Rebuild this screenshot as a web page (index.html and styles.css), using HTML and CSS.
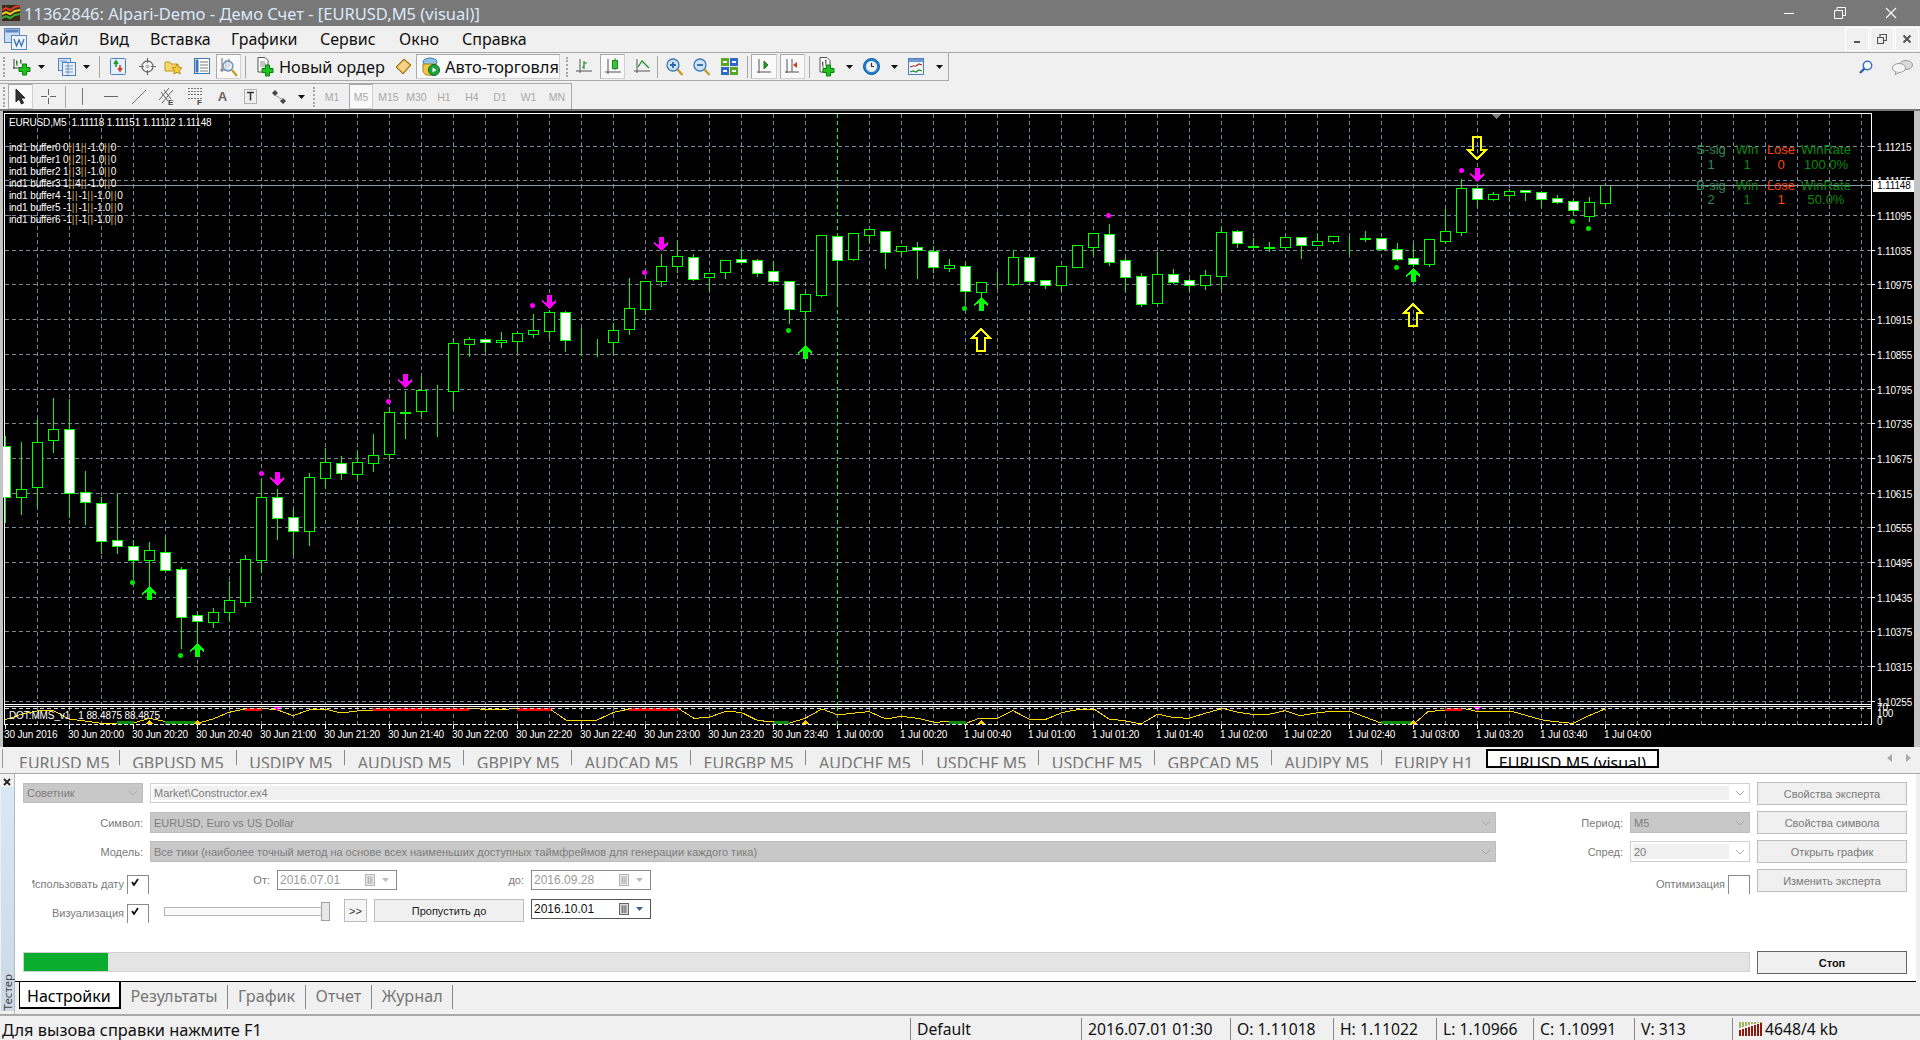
FILE: index.html
```html
<!DOCTYPE html>
<html>
<head>
  <meta charset="UTF-8" />
  <title>11362846: Alpari-Demo - Демо Счет - [EURUSD,M5 (visual)]</title>
  <link rel="stylesheet" href="styles.css">
</head>
<body>
  <!-- shared small glyphs -->
  <svg class="defs" width="0" height="0">
    <symbol id="chev" viewBox="0 0 10 6"><path d="M1 1l4 4 4-4" fill="none" stroke="#a8a8a8"/></symbol>
    <symbol id="tick" viewBox="0 0 8 8"><path d="M1 4l2 3 4-6" fill="none" stroke="#111" stroke-width="1.8"/></symbol>
    <symbol id="cal" viewBox="0 0 11 13"><rect x=".5" y=".5" width="9" height="11" fill="#e8e8e8" stroke="#b5b5b5"/><path d="M2 3h6M2 5h6M2 7h6M2 9h6M3.500 3v7M6 3v7" stroke="#b8b8b8"/></symbol>
    <symbol id="cal-on" viewBox="0 0 11 13"><rect x=".5" y=".5" width="9" height="11" fill="#dcdcdc" stroke="#666"/><path d="M2 3h6M2 5h6M2 7h6M2 9h6M3.500 3v7M6 3v7" stroke="#777"/></symbol>
    <symbol id="drop" viewBox="0 0 7 4"><path d="M0 0h7L3.500 4z" fill="#111"/></symbol>
    <symbol id="plus" viewBox="0 0 13 13"><path d="M4.500 1h4v3.500H12v4H8.500V12h-4V8.500H1v-4h3.500z" fill="#1fc31f" stroke="#0a7a0a"/></symbol>
  </svg>

  <header class="titlebar">
    <svg class="app-logo" width="18" height="16" viewBox="0 0 18 16">
      <rect width="18" height="16" fill="#3a2a18"/>
      <path d="M0 5l4-2 4 2 5-3 5-1" fill="none" stroke="#e03a1e" stroke-width="2"/>
      <path d="M0 9l4-2 4 2 5-3 5-1" fill="none" stroke="#f0d020" stroke-width="2"/>
      <path d="M0 13l4-2 4 2 5-3 5-1" fill="none" stroke="#35b030" stroke-width="2"/>
    </svg>
    <span class="title-text">11362846: Alpari-Demo - Демо Счет - [EURUSD,M5 (visual)]</span>
    <div class="win-buttons">
      <svg width="12" height="12" viewBox="0 0 12 12"><path d="M1 6.500h10" stroke="#fff"/></svg>
      <svg width="12" height="12" viewBox="0 0 12 12"><path d="M.5 3.500h8v8h-8zM3 3.500V.5h8.500v8H8.500" fill="none" stroke="#fff"/></svg>
      <svg width="12" height="12" viewBox="0 0 12 12"><path d="M1 1l10 10M11 1L1 11" stroke="#fff" stroke-width="1.100"/></svg>
    </div>
  </header>

  <nav class="menubar">
    <svg class="menu-logo" width="23" height="22" viewBox="0 0 23 22">
      <rect x=".5" y=".5" width="15" height="14" fill="#c9dcf4" stroke="#5d86bd"/>
      <rect x="1.500" y="1.500" width="13" height="3" fill="#5d86bd"/>
      <rect x="7.500" y="7.500" width="15" height="14" fill="#eef5fd" stroke="#5d86bd"/>
      <path d="M10 11l2.500 7 2.500-6 2.500 6 2.500-7" fill="none" stroke="#3a6fb0" stroke-width="1.300"/>
    </svg>
    <span class="menu-item file">Файл</span>
    <span class="menu-item view">Вид</span>
    <span class="menu-item insert">Вставка</span>
    <span class="menu-item charts">Графики</span>
    <span class="menu-item service">Сервис</span>
    <span class="menu-item window">Окно</span>
    <span class="menu-item help">Справка</span>
    <div class="mdi-buttons">
      <span class="mdi"><svg width="8" height="8" viewBox="0 0 8 8"><path d="M1 7h6" stroke="#555" stroke-width="2"/></svg></span>
      <span class="mdi"><svg width="10" height="10" viewBox="0 0 10 10"><path d="M.5 3.500h6v6h-6zM3 3V.5h6.500v6H7" fill="none" stroke="#555" stroke-width="1.200"/></svg></span>
      <span class="mdi"><svg width="10" height="10" viewBox="0 0 10 10"><path d="M1.500 1.500l7 7M8.500 1.500l-7 7" stroke="#555" stroke-width="2"/></svg></span>
    </div>
  </nav>

  <section class="toolbars">
    <div class="toolrow main-row">
      <i class="grip"></i>
      <span class="tool w31"><svg width="19" height="18" viewBox="0 0 19 18"><path d="M2 1v10M1 10h11" stroke="#444"/><path d="M4 3h1v5M8 2h1v4" stroke="#2a7a2a"/><use href="#plus" x="6" y="5" width="13" height="13"/></svg></span>
      <span class="tool w9"><svg width="7" height="4"><use href="#drop"/></svg></span>
      <span class="tool w33 ml4"><svg width="18" height="18" viewBox="0 0 18 18"><rect x=".5" y=".5" width="12" height="12" fill="#d9e6f5" stroke="#4d7fbd"/><rect x="4.500" y="4.500" width="13" height="13" fill="#e9f1fa" stroke="#4d7fbd"/><path d="M2 3h7M7 8h8M7 11h8M7 14h8M10 5v12" stroke="#6d94c4"/></svg></span>
      <span class="tool w7"><svg width="7" height="4"><use href="#drop"/></svg></span>
      <i class="sep ml9"></i>
      <span class="tool w36"><svg width="17" height="18" viewBox="0 0 17 18"><rect x=".5" y=".5" width="15" height="16" rx="1" fill="#e6f0fb" stroke="#4d7fbd"/><path d="M6 9V4M4 6l2-3 2 3" fill="none" stroke="#1c9a2c" stroke-width="1.600"/><path d="M10 7v5M8 10l2 3 2-3" fill="none" stroke="#d0452a" stroke-width="1.600"/></svg></span>
      <span class="tool w22"><svg width="17" height="17" viewBox="0 0 17 17"><circle cx="8.500" cy="8.500" r="5.500" fill="#f4f4f4" stroke="#6c6c6c" stroke-width="1.300"/><circle cx="8.500" cy="8.500" r="2" fill="#bdbdbd"/><path d="M8.500 0v5M8.500 12v5M0 8.500h5M12 8.500h5" stroke="#6c6c6c" stroke-width="1.200"/></svg></span>
      <span class="tool w31"><svg width="19" height="18" viewBox="0 0 19 18"><path d="M1 4h5l1 2h7v7H1z" fill="#f5d66a" stroke="#c29a28"/><path d="M13 6l1.600 3.400 3.400.4-2.500 2.400.7 3.800-3.200-1.800-3.200 1.800.7-3.800L8 9.800l3.400-.4z" fill="#f7cf3e" stroke="#b98d1c"/></svg></span>
      <span class="tool w26"><svg width="17" height="17" viewBox="0 0 17 17"><rect x=".5" y=".5" width="15" height="15" fill="#fff" stroke="#3f76b8"/><rect x="1.500" y="1.500" width="3" height="13" fill="#3f76b8"/><path d="M6 4h8M6 7h8M6 10h8M6 13h8" stroke="#7c7c7c"/></svg></span>
      <span class="tool pressed w25 ml1"><svg width="19" height="20" viewBox="0 0 19 20"><path d="M3 1v14M1 13h12M7 3v9M10 2v8" stroke="#6a6a6a"/><circle cx="9" cy="9" r="5" fill="#d8e7f7" fill-opacity=".7" stroke="#6c8fb8" stroke-width="1.300"/><path d="M13 13l5 6" stroke="#c69a28" stroke-width="2.200"/></svg></span>
      <i class="sep ml4"></i>
      <span class="tool labelled order"><svg width="17" height="20" viewBox="0 0 17 20"><path d="M1 .5h7l3 3V15H1z" fill="#fff" stroke="#555"/><path d="M3 5h5M3 7h6M3 9h5" stroke="#888"/><use href="#plus" x="4" y="7" width="13" height="13"/></svg><span>Новый ордер</span></span>
      <span class="tool w22"><svg width="17" height="17" viewBox="0 0 17 17"><path d="M1 9l8-8 7 6-8 9z" fill="#e0ac3c" stroke="#8a641a"/><path d="M3 9l6-6 5 4-6 7z" fill="#f6d48a"/></svg></span>
      <span class="tool pressed labelled auto"><svg width="19" height="19" viewBox="0 0 19 19"><ellipse cx="9" cy="5" rx="7" ry="4" fill="#8bc2e8" stroke="#3d7fa8"/><path d="M2 7h13v7a6 4 0 0 1-13 0z" fill="#eec649" stroke="#a5851e"/><circle cx="13" cy="13" r="5.500" fill="#1ba43a" stroke="#0c6a22"/><path d="M11.500 10.500v5l4-2.500z" fill="#fff"/></svg><span>Авто-торговля</span></span>
      <i class="grip ml6"></i>
      <span class="tool w29"><svg width="16" height="17" viewBox="0 0 16 17"><path d="M4 1v14M0 13h16" stroke="#555"/><path d="M8 3v8M8 5h3M8 9H6" stroke="#1c8a1c" stroke-width="1.200"/></svg></span>
      <span class="tool pressed w25 ml2"><svg width="16" height="18" viewBox="0 0 16 18"><path d="M3 1v15M0 14h16" stroke="#555"/><path d="M10 0v12" stroke="#1c8a1c"/><rect x="7.500" y="2.500" width="5" height="8" fill="#3ec43e" stroke="#1c8a1c"/></svg></span>
      <span class="tool w31 ml1"><svg width="16" height="17" viewBox="0 0 16 17"><path d="M3 1v14M0 13h16" stroke="#555"/><path d="M4 9l4-6 7 7" fill="none" stroke="#1c8a1c" stroke-width="1.200"/></svg></span>
      <i class="sep"></i>
      <span class="tool w33"><svg width="18" height="18" viewBox="0 0 18 18"><circle cx="7" cy="7" r="6" fill="#cfe3f6" stroke="#3b78b5" stroke-width="1.300"/><path d="M7 4v6M4 7h6" stroke="#2c68a8" stroke-width="1.800"/><path d="M11.500 11.500l5 5.500" stroke="#c69a28" stroke-width="2.400"/></svg></span>
      <span class="tool w21"><svg width="18" height="18" viewBox="0 0 18 18"><circle cx="7" cy="7" r="6" fill="#cfe3f6" stroke="#3b78b5" stroke-width="1.300"/><path d="M4 7h6" stroke="#2c68a8" stroke-width="1.800"/><path d="M11.500 11.500l5 5.500" stroke="#c69a28" stroke-width="2.400"/></svg></span>
      <span class="tool w35"><svg width="17" height="17" viewBox="0 0 17 17"><rect width="8" height="8" fill="#5aa820"/><rect x="9" width="8" height="8" fill="#3068c8"/><rect y="9" width="8" height="8" fill="#3068c8"/><rect x="9" y="9" width="8" height="8" fill="#5aa820"/><path d="M2 4h4M11 4h4M2 13h4M11 13h4" stroke="#fff" stroke-width="2"/></svg></span>
      <i class="sep"></i>
      <span class="tool pressed w26 ml3"><svg width="15" height="17" viewBox="0 0 15 17"><path d="M2 1v14M0 14h14" stroke="#555"/><path d="M7 3v8l4-4z" fill="#2a9a2a" stroke="#1c7a1c"/></svg></span>
      <span class="tool pressed w25 ml3"><svg width="15" height="17" viewBox="0 0 15 17"><path d="M2 1v14M0 14h14M7 1v13" stroke="#555"/><path d="M12 4L8 7l4 3z" fill="#d03a1a"/></svg></span>
      <i class="sep ml4"></i>
      <span class="tool w34"><svg width="16" height="20" viewBox="0 0 16 20"><path d="M1 .5h7l3 3V15H1z" fill="#fff" stroke="#555"/><path d="M3 5h1v6M6 3h1v6" stroke="#777"/><use href="#plus" x="3" y="7" width="13" height="13"/></svg></span>
      <span class="tool w10"><svg width="7" height="4"><use href="#drop"/></svg></span>
      <span class="tool w34"><svg width="17" height="19" viewBox="0 0 17 19"><circle cx="8.500" cy="9.500" r="8" fill="#1f7fd0" stroke="#0d5a9a"/><circle cx="8.500" cy="9.500" r="5.500" fill="#f2f2f2"/><path d="M8.500 6v3.500H11" fill="none" stroke="#333" stroke-width="1.200"/></svg></span>
      <span class="tool w10 ml1"><svg width="7" height="4"><use href="#drop"/></svg></span>
      <span class="tool w34"><svg width="16" height="17" viewBox="0 0 16 17"><rect x=".5" y=".5" width="15" height="16" fill="#eef5fb" stroke="#4d7fbd"/><rect x="1" y="1" width="14" height="3" fill="#6d9bd0"/><path d="M2 9l3-1 3 0 3-2 3 1" fill="none" stroke="#a52a1a" stroke-width="1.200"/><path d="M2 14l3-1 3 1 3-2 3 1" fill="none" stroke="#2a8a2a" stroke-width="1.200"/></svg></span>
      <span class="tool w10 ml1"><svg width="7" height="4"><use href="#drop"/></svg></span>
      <div class="far-right">
        <svg width="14" height="14" viewBox="0 0 14 14"><circle cx="8.500" cy="5.500" r="4.200" fill="#fff" stroke="#3a6fc0" stroke-width="1.500"/><path d="M5.500 8.500L1 13" stroke="#2a5fb0" stroke-width="2.400"/></svg>
        <svg width="21" height="16" viewBox="0 0 21 16"><ellipse cx="14" cy="6" rx="6.500" ry="4.500" fill="#dadada" stroke="#9a9a9a"/><ellipse cx="7" cy="9" rx="6.500" ry="4.500" fill="#f5f5f5" stroke="#9a9a9a"/><path d="M4 13l-1 3 4-2.500" fill="#f5f5f5" stroke="#9a9a9a"/></svg>
      </div>
    </div>

    <div class="toolrow draw-row">
      <i class="grip"></i>
      <span class="tool pressed w25 ml2"><svg width="11" height="17" viewBox="0 0 11 17"><path d="M1 1v13l3-3 2.500 5 2-1-2.500-5h4z" fill="#333" stroke="#222"/></svg></span>
      <span class="tool w30"><svg width="15" height="15" viewBox="0 0 15 15"><path d="M7.500 0v6M7.500 9v6M0 7.500h6M9 7.500h6" stroke="#666"/></svg></span>
      <i class="sep ml2"></i>
      <span class="tool w33"><svg width="3" height="17" viewBox="0 0 3 17"><path d="M1.500 0v17" stroke="#777"/></svg></span>
      <span class="tool w24"><svg width="14" height="3" viewBox="0 0 14 3"><path d="M0 1.500h14" stroke="#666"/></svg></span>
      <span class="tool w32"><svg width="14" height="14" viewBox="0 0 14 14"><path d="M0 14L14 0" stroke="#777"/></svg></span>
      <span class="tool w23"><svg width="15" height="19" viewBox="0 0 15 19"><path d="M0 13L10 1M3 16L14 3M2 5l7 9M5 3l7 9" stroke="#666"/><text class="mini" x="9" y="18">E</text></svg></span>
      <span class="tool w34"><svg width="15" height="19" viewBox="0 0 15 19"><path d="M0 1.500h14M0 4.500h14M0 7.500h14M0 11.500h14" stroke="#777" stroke-dasharray="2 1"/><text class="mini" x="9" y="18">F</text></svg></span>
      <span class="tool w21 glyph">A</span>
      <span class="tool w35"><svg width="13" height="15" viewBox="0 0 13 15"><rect x=".5" y=".5" width="12" height="14" fill="none" stroke="#777" stroke-dasharray="1 1"/><path d="M3 3.500h7M6.500 3.500v8" stroke="#333" stroke-width="1.500"/></svg></span>
      <span class="tool w22"><svg width="14" height="14" viewBox="0 0 14 14"><path d="M3 0l3 3-3 3-3-3zM11 8l3 3-3 3-3-3z" fill="#444"/><path d="M3 5l8 5" stroke="#999"/></svg></span>
      <span class="tool w22"><svg width="7" height="4"><use href="#drop"/></svg></span>
      <i class="grip ml1"></i>
      <span class="tool period w32">M1</span>
      <span class="tool period pressed w24 ml1">M5</span>
      <span class="tool period w29 ml1">M15</span>
      <span class="tool period w27">M30</span>
      <span class="tool period w28">H1</span>
      <span class="tool period w28">H4</span>
      <span class="tool period w28">D1</span>
      <span class="tool period w29">W1</span>
      <span class="tool period w28">MN</span>
    </div>
  </section>

  <section class="chart-wrap">
    <svg id="chart" class="chart" width="1911" height="636" viewBox="3 112 1911 636">
      <rect x="3" y="112" width="1911" height="636" fill="#000"/>
      <g id="gridLayer"></g>
      <g id="candleLayer"></g>
      <g id="markLayer"></g>
      <g id="indicatorLayer"></g>
      <g id="axisLayer"></g>
      <text class="txt head" x="9" y="127">EURUSD,M5  1.11118 1.11151 1.11112 1.11148</text>
      <text class="txt" x="9" y="152">ind1 buffer0 0<tspan class="pipe">||</tspan>1<tspan class="pipe">||</tspan>-1.0<tspan class="pipe">||</tspan>0</text>
      <text class="txt" x="9" y="164">ind1 buffer1 0<tspan class="pipe">||</tspan>2<tspan class="pipe">||</tspan>-1.0<tspan class="pipe">||</tspan>0</text>
      <text class="txt" x="9" y="176">ind1 buffer2 1<tspan class="pipe">||</tspan>3<tspan class="pipe">||</tspan>-1.0<tspan class="pipe">||</tspan>0</text>
      <text class="txt" x="9" y="188">ind1 buffer3 1<tspan class="pipe">||</tspan>4<tspan class="pipe">||</tspan>-1.0<tspan class="pipe">||</tspan>0</text>
      <text class="txt" x="9" y="200">ind1 buffer4 -1<tspan class="pipe">||</tspan>-1<tspan class="pipe">||</tspan>-1.0<tspan class="pipe">||</tspan>0</text>
      <text class="txt" x="9" y="212">ind1 buffer5 -1<tspan class="pipe">||</tspan>-1<tspan class="pipe">||</tspan>-1.0<tspan class="pipe">||</tspan>0</text>
      <text class="txt" x="9" y="224">ind1 buffer6 -1<tspan class="pipe">||</tspan>-1<tspan class="pipe">||</tspan>-1.0<tspan class="pipe">||</tspan>0</text>
      <text class="txt" x="9" y="720">DOT:MMS_v1   1 88.4875 88.4875</text>
      <g class="stats">
        <text class="sig" x="1711" y="155">S-sig</text><text class="win" x="1747" y="155">Win</text><text class="lose" x="1781" y="155">Lose</text><text class="win" x="1826" y="155">WinRate</text>
        <text class="sig" x="1711" y="170">1</text><text class="win" x="1747" y="170">1</text><text class="lose" x="1781" y="170">0</text><text class="win" x="1826" y="170">100.0%</text>
        <text class="sig" x="1711" y="191">B-sig</text><text class="win" x="1747" y="191">Win</text><text class="lose" x="1781" y="191">Lose</text><text class="win" x="1826" y="191">WinRate</text>
        <text class="sig" x="1711" y="205">2</text><text class="win" x="1747" y="205">1</text><text class="lose" x="1781" y="205">1</text><text class="win" x="1826" y="205">50.0%</text>
      </g>
    </svg>
  </section>

  <section class="chart-tabs">
    <div class="ctabs">
      <span class="ctab first">EURUSD M5</span>
      <span class="ctab">GBPUSD M5</span>
      <span class="ctab">USDJPY M5</span>
      <span class="ctab">AUDUSD M5</span>
      <span class="ctab">GBPJPY M5</span>
      <span class="ctab">AUDCAD M5</span>
      <span class="ctab">EURGBP M5</span>
      <span class="ctab">AUDCHF M5</span>
      <span class="ctab">USDCHF M5</span>
      <span class="ctab">USDCHF M5</span>
      <span class="ctab">GBPCAD M5</span>
      <span class="ctab">AUDJPY M5</span>
      <span class="ctab last">EURJPY H1</span>
      <span class="ctab active">EURUSD M5 (visual)</span>
    </div>
    <div class="tab-arrows">
      <svg width="5" height="8" viewBox="0 0 5 8"><path d="M5 0v8L0 4z" fill="#aaa"/></svg>
      <svg width="5" height="8" viewBox="0 0 5 8"><path d="M0 0v8l5-4z" fill="#aaa"/></svg>
    </div>
  </section>

  <section class="tester">
    <aside class="strip">
      <svg class="strip-close" width="8" height="8" viewBox="0 0 8 8"><path d="M1 1l6 6M7 1L1 7" stroke="#222" stroke-width="1.800"/></svg>
      <div class="strip-bar"><span>Тестер</span></div>
    </aside>
    <div class="tester-body">
      <div class="settings">
        <div class="fields">
          <div class="row r1">
            <div class="ctl sel expert"><span>Советник</span><svg class="chev" width="10" height="6"><use href="#chev"/></svg></div>
            <div class="ctl combo grow"><span class="inner">Market\Constructor.ex4</span><svg class="chev" width="10" height="6"><use href="#chev"/></svg></div>
          </div>
          <div class="row r2">
            <label class="lbl w120">Символ:</label>
            <div class="ctl sel grow"><span>EURUSD, Euro vs US Dollar</span><svg class="chev" width="10" height="6"><use href="#chev"/></svg></div>
            <label class="lbl w120">Период:</label>
            <div class="ctl sel w120"><span>M5</span><svg class="chev" width="10" height="6"><use href="#chev"/></svg></div>
          </div>
          <div class="row r2">
            <label class="lbl w120">Модель:</label>
            <div class="ctl sel grow"><span>Все тики (наиболее точный метод на основе всех наименьших доступных таймфреймов для генерации каждого тика)</span><svg class="chev" width="10" height="6"><use href="#chev"/></svg></div>
            <label class="lbl w120">Спред:</label>
            <div class="ctl combo w120"><span class="inner">20</span><svg class="chev" width="10" height="6"><use href="#chev"/></svg></div>
          </div>
          <div class="row r4">
            <label class="lbl clipped cut">Использовать дату</label>
            <span class="check"><svg width="8" height="8"><use href="#tick"/></svg></span>
            <label class="lbl w121 low">От:</label>
            <div class="ctl date"><span>2016.07.01</span><svg class="cal" width="11" height="13"><use href="#cal"/></svg><svg class="caret" width="7" height="4" viewBox="0 0 7 4"><path d="M0 0h7L3.500 4z" fill="#bbb"/></svg></div>
            <label class="lbl w128 low">до:</label>
            <div class="ctl date"><span>2016.09.28</span><svg class="cal" width="11" height="13"><use href="#cal"/></svg><svg class="caret" width="7" height="4" viewBox="0 0 7 4"><path d="M0 0h7L3.500 4z" fill="#bbb"/></svg></div>
            <label class="lbl opt">Оптимизация</label>
            <span class="check"></span>
          </div>
          <div class="row r5">
            <label class="lbl clipped">Визуализация</label>
            <span class="check"><svg width="8" height="8"><use href="#tick"/></svg></span>
            <div class="slider"><i class="thumb"></i></div>
            <button class="btn ffwd">&gt;&gt;</button>
            <button class="btn skip">Пропустить до</button>
            <div class="ctl date live"><span>2016.10.01</span><svg class="cal" width="11" height="13"><use href="#cal-on"/></svg><svg class="caret" width="7" height="4" viewBox="0 0 7 4"><path d="M0 0h7L3.500 4z" fill="#40608a"/></svg></div>
          </div>
          <div class="progress"><div class="progress-fill"></div></div>
        </div>
        <div class="actions">
          <button class="btn act">Свойства эксперта</button>
          <button class="btn act">Свойства символа</button>
          <button class="btn act">Открыть график</button>
          <button class="btn act">Изменить эксперта</button>
          <button class="btn act stop">Стоп</button>
        </div>
      </div>
      <div class="ttabs">
        <span class="ttab active">Настройки</span>
        <span class="ttab">Результаты</span>
        <span class="ttab">График</span>
        <span class="ttab">Отчет</span>
        <span class="ttab">Журнал</span>
      </div>
    </div>
  </section>

  <footer class="statusbar">
    <span class="cell hint">Для вызова справки нажмите F1</span>
    <span class="cell profile">Default</span>
    <span class="cell stamp">2016.07.01 01:30</span>
    <span class="cell ohlc">O: 1.11018</span>
    <span class="cell ohlc">H: 1.11022</span>
    <span class="cell ohlc l">L: 1.10966</span>
    <span class="cell ohlc c">C: 1.10991</span>
    <span class="cell vol">V: 313</span>
    <span class="cell conn">
      <svg width="25" height="14" viewBox="0 0 25 14"><path d="M1 14V8M4 14V7M7 14V6M10 14V5M13 14V4M16 14V3M19 14V2M22 14V1" stroke="#8a1a10" stroke-width="2"/><path d="M1 6V0M4 5V0M7 4V0M10 3V0M13 2V0M16 2V0M19 1V0M22 1V0" stroke="#a6b05a" stroke-width="2"/></svg>
      4648/4 kb
    </span>
  </footer>

  <script src="chart.js"></script>
</body>
</html>
```

FILE: styles.css
```css
* {
  box-sizing: border-box;
}

html, body {
  margin: 0;
  padding: 0;
}

html {
  height: 1040px;
  overflow: hidden;
}

body {
  width: 1920px;
  height: 1040px;
  overflow: hidden;
  background-color: #f0f0f0;
  color: #111;
  font-family: "Noto Sans", "Liberation Sans", sans-serif;
}

.defs {
  position: absolute;
}

/* title bar */
.titlebar {
  height: 26px;
  background-color: #787878;
  display: flex;
  align-items: center;
  padding-left: 2px;
}

.app-logo {
  margin-right: 4px;
}

.title-text {
  color: #dce8f8;
  font-size: 16.500px;
}

.win-buttons {
  margin-left: auto;
  display: flex;
  gap: 39px;
  padding-right: 23px;
  align-items: center;
}

/* menu */
.menubar {
  height: 27px;
  display: flex;
  align-items: center;
  background-color: #f0f0f0;
  border-bottom: 1px solid #a9a9a9;
  padding-left: 4px;
  font-size: 16px;
}

.menu-logo {
  margin-right: 10px;
}

.menu-item.file { width: 62px; }
.menu-item.view { width: 51px; }
.menu-item.insert { width: 81px; }
.menu-item.charts { width: 89px; }
.menu-item.service { width: 79px; }
.menu-item.window { width: 63px; }

.mdi-buttons {
  margin-left: auto;
  display: flex;
  gap: 1px;
  padding-right: 1px;
}

.mdi {
  width: 24px;
  height: 24px;
  border: 1px solid #fff;
  display: flex;
  align-items: center;
  justify-content: center;
}

/* toolbars */
.toolbars {
  height: 58px;
  background-color: #f0f0f0;
  border-bottom: 2px solid #777;
  position: relative;
}

.toolrow {
  display: flex;
  align-items: center;
}

.main-row {
  height: 28px;
  width: 949px;
  padding-left: 3px;
  border-bottom: 1px solid #a9a9a9;
  border-right: 1px solid #a9a9a9;
}

.draw-row {
  height: 26px;
  width: 572px;
  margin-top: 2px;
  padding-left: 3px;
  border-top: 1px solid #a9a9a9;
  border-right: 1px solid #a9a9a9;
}

.grip {
  width: 3px;
  height: 20px;
  flex: none;
  border-left: 2px dotted #a5a5a5;
}

.sep {
  width: 1px;
  height: 22px;
  flex: none;
  background-color: #a5a5a5;
}

.tool {
  flex: none;
  height: 25px;
  display: flex;
  align-items: center;
  justify-content: center;
}

.pressed {
  background-color: #f9f9f9;
  border: 1px solid #d0d0d0;
  border-top-color: #a9a9a9;
  border-left-color: #a9a9a9;
}

.w7 { width: 7px; }
.w9 { width: 9px; }
.w10 { width: 10px; }
.w21 { width: 21px; }
.w22 { width: 22px; }
.w23 { width: 23px; }
.w24 { width: 24px; }
.w25 { width: 25px; }
.w26 { width: 26px; }
.w27 { width: 27px; }
.w28 { width: 28px; }
.w29 { width: 29px; }
.w30 { width: 30px; }
.w31 { width: 31px; }
.w32 { width: 32px; }
.w33 { width: 33px; }
.w34 { width: 34px; }
.w35 { width: 35px; }
.w36 { width: 36px; }

.ml1 { margin-left: 1px; }
.ml2 { margin-left: 2px; }
.ml3 { margin-left: 3px; }
.ml4 { margin-left: 4px; }
.ml6 { margin-left: 6px; }
.ml9 { margin-left: 9px; }

.labelled {
  font-size: 16.300px;
  justify-content: flex-start;
  gap: 5px;
  white-space: nowrap;
}

.order {
  width: 146px;
  padding-left: 11px;
}

.auto {
  width: 144px;
  margin-left: 2px;
  padding-left: 4px;
  font-size: 16.400px;
}

.period {
  font-family: "Liberation Sans", sans-serif;
  font-size: 10.5px;
  color: #a8a8a8;
}

.glyph {
  font-family: "Liberation Sans", sans-serif;
  font-size: 13px;
  font-weight: bold;
  color: #666;
}

.mini {
  font-family: "Liberation Sans", sans-serif;
  font-size: 8px;
  font-weight: bold;
  fill: #444;
}

.far-right {
  position: absolute;
  top: 3px;
  right: 7px;
  display: flex;
  gap: 19px;
  align-items: center;
  height: 22px;
}

/* chart */
.chart-wrap {
  height: 636px;
  padding: 0 6px 0 3px;
  background-color: #c4c4c4;
}

.chart {
  display: block;
  shape-rendering: crispEdges;
}

.chart text {
  font-family: "Liberation Sans", sans-serif;
}

.chart .txt {
  font-size: 10px;
  fill: #fff;
  letter-spacing: -0.1px;
  white-space: pre;
}

.chart .head {
  letter-spacing: -0.18px;
}

.chart .pipe {
  fill: #d8a96a;
  letter-spacing: 0.7px;
}

.chart .ax {
  font-size: 10px;
  fill: #fff;
  letter-spacing: -0.15px;
}

.chart .ax.dark {
  fill: #000;
}

.stats text {
  font-size: 13px;
  text-anchor: middle;
}

.stats .sig { fill: #2e8b57; }
.stats .win { fill: #0a8a0a; }
.stats .lose { fill: #ff4500; }

/* symbol tabs */
.chart-tabs {
  height: 26px;
  position: relative;
  background-color: #f0f0f0;
  padding: 2px 0 0 2px;
}

.ctabs {
  display: flex;
  height: 19px;
  overflow: hidden;
  border-left: 1px solid #9a9a9a;
}

.ctab {
  height: 24px;
  padding: 2px 12.700px 0 12.700px;
  font-size: 16px;
  line-height: 24px;
  color: #777;
  white-space: nowrap;
  position: relative;
}

.ctab::after {
  content: "";
  position: absolute;
  right: 0;
  top: 1px;
  height: 15px;
  width: 1px;
  background-color: #8a8a8a;
}

.ctab.first {
  padding-left: 16px;
  padding-right: 10px;
}

.ctab.last::after,
.ctab.active::after {
  display: none;
}

.ctab.active {
  height: 19px;
  color: #000;
  border: 2px solid #000;
  background-color: #fff;
  padding: 0 11px;
  overflow: hidden;
}

.tab-arrows {
  position: absolute;
  right: 9px;
  top: 7px;
  display: flex;
  gap: 14px;
}

/* tester panel */
.tester {
  height: 241px;
  display: flex;
  border-top: 1px solid #a9a9a9;
}

.strip {
  width: 15px;
  flex: none;
  border-right: 1px solid #b8b8b8;
  display: flex;
  flex-direction: column;
  align-items: center;
}

.strip-close {
  margin: 4px 0 1px;
}

.strip-bar {
  flex: 1;
  width: 13px;
  margin-bottom: 3px;
  background: linear-gradient(180deg, #d9e8f6 0%, #cbd9e6 100%);
  display: flex;
  align-items: flex-end;
  justify-content: center;
}

.strip-bar span {
  writing-mode: vertical-rl;
  transform: rotate(180deg);
  font-size: 11.500px;
  color: #444;
  line-height: 13px;
}

.tester-body {
  width: 1901px;
  display: flex;
  flex-direction: column;
}

.settings {
  height: 207px;
  background-color: #fff;
  display: flex;
  padding-left: 8px;
  font-family: "Liberation Sans", sans-serif;
  font-size: 11px;
}

.fields {
  width: 1727px;
  padding-top: 9px;
  display: flex;
  flex-direction: column;
}

.row {
  display: flex;
  flex: none;
}

.r1 { height: 20px; gap: 7px; }
.r2 { height: 21px; margin-top: 8px; gap: 7px; }
.r1 + .r2 { margin-top: 9px; }
.r4 { height: 24px; margin-top: 8px; }
.r5 { height: 23px; margin-top: 5px; }

.grow {
  flex: 1;
  min-width: 0;
}

.w120 { width: 120px; flex: none; }
.w121 { width: 121px; flex: none; }
.w128 { width: 127px; flex: none; }

.lbl {
  display: flex;
  align-items: center;
  justify-content: flex-end;
  color: #7a7a7a;
  white-space: nowrap;
  overflow: hidden;
}

.lbl.clipped {
  width: 95px;
  margin-left: 6px;
  flex: none;
  margin-right: 3px;
  padding-top: 4px;
}

.lbl.cut {
  width: 92px;
  margin-left: 9px;
}

.lbl.low {
  align-items: flex-start;
  padding-top: 4px;
  margin-right: 7px;
}

.lbl.opt {
  margin-left: auto;
  margin-right: 3px;
  padding-top: 4px;
}

.ctl {
  display: flex;
  align-items: center;
  color: #7e7e7e;
  position: relative;
}

.sel {
  background-color: #c8c8c8;
  border: 1px solid #bdbdbd;
  padding-left: 3px;
}

.expert {
  width: 120px;
  flex: none;
}

.combo {
  background-color: #fff;
  border: 1px solid #cfcfcf;
  padding: 2px 20px 2px 2px;
}

.combo .inner {
  background-color: #f0f0f0;
  flex: 1;
  align-self: stretch;
  display: flex;
  align-items: center;
  padding-left: 1px;
}

.chev {
  position: absolute;
  right: 4px;
  top: 50%;
  margin-top: -3px;
}

.date {
  width: 120px;
  height: 20px;
  flex: none;
  border: 1px solid #8a8a8a;
  background-color: #fff;
  padding-left: 2px;
  font-size: 12px;
  color: #9a9a9a;
}

.date .cal {
  position: absolute;
  right: 20px;
  top: 3px;
}

.date .caret {
  position: absolute;
  right: 7px;
  top: 7px;
}

.date.live {
  color: #111;
  border-color: #555;
}

.check {
  width: 22px;
  height: 19px;
  flex: none;
  margin-top: 5px;
  border: 1px solid #8a8a8a;
  border-bottom: none;
  padding: 2px 0 0 3px;
  line-height: 0;
}

.slider {
  width: 166px;
  height: 9px;
  flex: none;
  margin: 8px 0 0 15px;
  border: 1px solid #b5b5b5;
  background-color: #fafafa;
  position: relative;
}

.thumb {
  position: absolute;
  right: -1px;
  top: -6px;
  width: 9px;
  height: 19px;
  background-color: #e8e8e8;
  border: 1px solid #a0a0a0;
}

.btn {
  font-family: "Liberation Sans", sans-serif;
  font-size: 11px;
  height: 23px;
  padding: 0;
  background-color: #f0f0f0;
  border: 1px solid #bdbdbd;
  color: #7a7a7a;
}

.ffwd {
  width: 23px;
  margin-left: 14px;
  color: #333;
  background-color: #f5f5f5;
}

.skip {
  width: 150px;
  margin: 0 7px;
  color: #222;
}

.progress {
  height: 20px;
  margin-top: 30px;
  background-color: #e4e4e4;
  border: 1px solid #cfcfcf;
  flex: none;
}

.progress-fill {
  width: 84px;
  height: 100%;
  background-color: #0aad2e;
}

.actions {
  width: 150px;
  margin-left: 7px;
  padding-top: 8px;
  display: flex;
  flex-direction: column;
  gap: 6px;
}

.act {
  flex: none;
}

.stop {
  margin-top: 53px;
  background-color: #f0f0f0;
  border-color: #666;
  color: #111;
  font-weight: bold;
}

.ttabs {
  height: 30px;
  display: flex;
  background-color: #f0f0f0;
  border-top: 1px solid #000;
  padding-left: 4px;
}

.ttab {
  height: 24px;
  margin-top: 3px;
  padding: 0 9.700px;
  font-size: 16.200px;
  line-height: 23px;
  color: #777;
  border-right: 1px solid #8a8a8a;
}

.ttab.active {
  height: 28px;
  margin-top: -1px;
  padding: 3px 8px 0 7px;
  color: #000;
  background-color: #fff;
  border: 1px solid #000;
  border-right-width: 2px;
  border-bottom-width: 2px;
  font-size: 16px;
}

/* status bar */
.statusbar {
  height: 26px;
  display: flex;
  border-top: 2px solid #a9a9a9;
  font-size: 15.700px;
  padding-top: 2px;
}

.cell {
  flex: none;
  padding-left: 6px;
  border-left: 1px solid #888;
  white-space: nowrap;
  display: flex;
  align-items: center;
}

.hint {
  width: 910px;
  padding-left: 2px;
  border-left: none;
  font-size: 16.400px;
}

.profile { width: 171px; }
.stamp { width: 149px; }
.ohlc { width: 103px; }
.ohlc.l { width: 97px; }
.ohlc.c { width: 101px; }
.vol { width: 98px; }

.conn {
  gap: 1px;
}
```

FILE: chart.js
```js
// candles: [high, bodyTop, bodyBottom, low, bearish] in screen pixels, one per bar
var candles = [
  [437,447,498,523,1],[443,490,498,515,0],[420,443,488,508,0],[399,430,441,453,0],
  [400,430,494,518,1],[472,493,503,525,1],[498,504,542,554,1],[494,541,547,554,1],
  [541,547,561,578,1],[543,551,561,586,0],[538,553,571,572,1],[568,570,618,649,1],
  [612,616,622,645,1],[609,613,623,628,0],[582,601,613,621,0],[556,560,603,607,0],
  [480,498,561,573,0],[490,498,519,540,1],[509,518,532,555,1],[474,478,532,546,0],
  [449,463,479,489,0],[457,464,474,480,1],[451,463,475,479,0],[435,456,464,472,0],
  [408,413,455,459,0],[392,413,414,439,0],[378,391,412,417,0],[386,390,390,437,0],
  [340,344,392,410,0],[338,340,345,357,0],[339,340,343,352,1],[333,341,343,348,0],
  [333,334,342,353,0],[315,331,335,338,0],[311,313,332,338,0],[312,313,341,352,1],
  [329,341,341,356,0],[340,342,342,357,0],[324,331,343,355,0],[279,309,330,335,0],
  [282,282,310,315,0],[255,267,282,287,0],[242,257,267,273,0],[255,258,280,281,1],
  [274,274,278,291,0],[261,261,273,279,0],[252,260,263,265,1],[260,261,274,277,1],
  [262,272,282,283,1],[282,282,310,324,1],[293,295,312,345,0],[236,236,296,297,0],
  [237,237,261,304,1],[234,234,260,261,0],[230,230,236,243,0],[232,232,253,269,1],
  [247,247,252,256,0],[243,248,251,279,1],[247,252,268,273,1],[260,266,269,272,0],
  [264,267,292,303,1],[283,283,293,297,0],[273,282,282,289,0],[251,258,285,286,0],
  [258,258,282,283,1],[281,281,286,289,1],[267,267,286,291,0],[246,246,268,268,0],
  [234,234,248,255,0],[225,235,263,266,1],[258,261,278,292,1],[274,277,305,307,1],
  [253,275,304,304,0],[270,275,283,284,1],[280,281,286,291,1],[271,276,286,290,0],
  [228,233,277,290,0],[231,232,244,248,1],[239,247,248,248,0],[243,248,249,252,0],
  [238,238,248,248,0],[238,238,246,259,1],[235,242,246,246,0],[237,237,242,244,0],
  [237,237,237,254,0],[232,239,240,242,0],[239,239,250,250,1],[244,250,260,261,1],
  [245,259,265,267,1],[240,240,265,267,0],[210,232,242,244,0],[180,189,233,236,0],
  [186,189,200,207,1],[193,195,200,201,0],[190,192,196,201,0],[191,191,193,201,1],
  [193,193,200,207,1],[196,199,203,204,1],[200,202,211,215,1],[198,203,217,222,0],
  [184,186,204,207,0]
];

var magentaDots = [[261,474],[388,402],[532,306],[644,273],[1108,216],[1461,171]];
var magentaArrows = [[277,480],[405,382],[549,303],[661,245],[1477,176]];
var greenDots = [[132,583],[180,656],[788,331],[964,309],[1396,268],[1572,222],[1588,229]];
var greenArrows = [[149,594],[197,651],[805,353],[981,305],[1413,276]];
var yellowUp = [[981,330],[1413,305]];
var yellowDown = [[1477,160]];

// oscillator line, x in pixels, y in 3x crop units below y=690
var osc = [
  [5,92],[13,85],[21,76],[37,66],[53,64],[69,90],[85,96],[101,103],[117,103],[133,103],[149,88],[165,97],
  [181,103],[197,103],[213,90],[229,70],[245,60],[261,58],[277,62],[293,80],[309,63],[325,60],[341,72],
  [357,66],[373,63],[389,60],[405,58],[421,58],[437,58],[453,58],[469,58],[485,61],[501,62],[517,58],
  [533,58],[549,58],[566,93],[597,93],[614,70],[629,60],[645,58],[661,58],[678,58],[694,88],[709,85],
  [726,67],[741,70],[758,95],[774,98],[789,103],[805,88],[822,60],[838,78],[855,72],[869,68],[886,90],
  [901,82],[918,88],[935,100],[949,97],[966,103],[979,88],[997,88],[1013,65],[1029,90],[1044,93],[1063,70],
  [1078,62],[1094,60],[1109,90],[1124,95],[1141,105],[1158,75],[1172,85],[1189,88],[1206,72],[1223,58],
  [1238,70],[1252,76],[1269,76],[1285,65],[1300,80],[1316,72],[1334,66],[1349,66],[1381,102],[1415,102],
  [1428,68],[1445,63],[1462,57],[1478,68],[1494,67],[1513,68],[1541,92],[1555,98],[1573,103],[1589,80],[1605,60]
];
var redRuns = [[245,262],[373,469],[517,551],[629,678],[1445,1462]];
var greenRuns = [[117,134],[165,197],[774,789],[949,966],[1381,1415]];
var upMarks = [149,197,805,981,1413];
var downMarks = [[277,4],[405,1],[549,1],[660,1],[1477,4]];

var NS = "http://www.w3.org/2000/svg";

function add(layer, tag, attrs, text) {
  var el = document.createElementNS(NS, tag);
  for (var k in attrs) el.setAttribute(k, attrs[k]);
  if (text) el.textContent = text;
  document.getElementById(layer).appendChild(el);
  return el;
}

function hline(layer, y, x1, x2, color, dash) {
  var a = { x1: x1, x2: x2, y1: y + 0.5, y2: y + 0.5, stroke: color };
  if (dash) a["stroke-dasharray"] = dash;
  add(layer, "line", a);
}

function vline(layer, x, y1, y2, color, dash) {
  var a = { x1: x + 0.5, x2: x + 0.5, y1: y1, y2: y2, stroke: color };
  if (dash) a["stroke-dasharray"] = dash;
  add(layer, "line", a);
}

var GRID = "#778899";
var RIGHT = 1871;

// grid
var i, k, y, x;
for (i = 0; i <= 16; i++) {
  y = Math.round(147.7 + 34.69 * i);
  hline("gridLayer", y - 1, 5, RIGHT, GRID, "4 3");
  hline("axisLayer", y - 1, RIGHT, RIGHT + 4, "#fff");
  add("axisLayer", "text", { "class": "ax", x: 1877, y: y + 4 }, (1.11215 - 0.0006 * i).toFixed(5));
}
for (x = 37; x < RIGHT; x += 32) {
  vline("gridLayer", x, 115, 705, GRID, "4 3");
  vline("gridLayer", x, 708, 726, GRID, "4 3");
}
vline("gridLayer", 837, 115, 705, "#00ff00", "4 3");
vline("gridLayer", 837, 708, 726, "#00ff00", "4 3");

// candles
candles.forEach(function (c, n) {
  var cx = 5 + 16 * n;
  vline("candleLayer", cx, c[0], c[3] + 1, "#00ff00");
  add("candleLayer", "rect", {
    x: cx - 4.5, y: c[1] + 0.5, width: 10, height: Math.max(c[2] - c[1], 0),
    fill: c[4] ? "#fff" : "#000", stroke: "#00ff00"
  });
});

// signals
function dot(p, color) {
  add("markLayer", "circle", { cx: p[0] + 0.5, cy: p[1] + 0.5, r: 2.5, fill: color, "shape-rendering": "auto" });
}
magentaDots.forEach(function (p) { dot(p, "#ff00ff"); });
greenDots.forEach(function (p) { dot(p, "#00e600"); });

var arrowShape = "0,-7 7,0 7,2 2.500,-1 2.500,7 -2.500,7 -2.500,-1 -7,2 -7,0";
greenArrows.forEach(function (p) {
  add("markLayer", "polygon", { points: arrowShape, fill: "#00ff00", transform: "translate(" + p[0] + " " + p[1] + ")" });
});
magentaArrows.forEach(function (p) {
  add("markLayer", "polygon", { points: arrowShape, fill: "#ff00ff", transform: "translate(" + p[0] + " " + p[1] + ") scale(1 -1)" });
});

var hollowShape = "0,0 9,9 4,9 4,22 -4,22 -4,9 -9,9";
yellowUp.forEach(function (p) {
  add("markLayer", "polygon", { points: hollowShape, fill: "none", stroke: "#ffff00", "stroke-width": 2, transform: "translate(" + p[0] + " " + p[1] + ")" });
});
yellowDown.forEach(function (p) {
  add("markLayer", "polygon", { points: hollowShape, fill: "none", stroke: "#ffff00", "stroke-width": 2, transform: "translate(" + p[0] + " " + p[1] + ") scale(1 -1)" });
});

// bid line and shift marker
hline("axisLayer", 186, 5, RIGHT, "#8c9bab");
add("axisLayer", "polygon", { points: "1491,115 1501,115 1496,120", fill: "#808080" });
add("axisLayer", "rect", { x: 1873, y: 181, width: 41, height: 12, fill: "#fff" });
add("axisLayer", "text", { "class": "ax dark", x: 1877, y: 190 }, "1.11148");

// oscillator
function oy(v) { return 690 + v / 3; }
add("indicatorLayer", "polyline", {
  points: osc.map(function (p) { return p[0] + "," + oy(p[1]); }).join(" "),
  fill: "none", stroke: "#ffd700"
});
redRuns.forEach(function (r) {
  add("indicatorLayer", "rect", { x: r[0], y: 709, width: r[1] - r[0], height: 3, fill: "#ff0000" });
});
greenRuns.forEach(function (r) {
  add("indicatorLayer", "rect", { x: r[0], y: 722, width: r[1] - r[0], height: 3, fill: "#0a8a0a" });
});
upMarks.forEach(function (x) {
  add("indicatorLayer", "polygon", { points: (x - 4) + ",725 " + (x + 4) + ",725 " + x + ",721", fill: "#ffcc00" });
});
downMarks.forEach(function (m) {
  add("indicatorLayer", "polygon", { points: (m[0] - m[1]) + ",708 " + (m[0] + m[1]) + ",708 " + m[0] + "," + (708 + m[1]), fill: "#ff00ff" });
});

// frames
hline("axisLayer", 114, 4, RIGHT + 1, "#fff");
hline("axisLayer", 705, 4, RIGHT + 1, "#fff");
hline("axisLayer", 707, 4, RIGHT + 1, "#fff");
hline("axisLayer", 709, 5, RIGHT, "#dcdcdc", "4 3");
hline("axisLayer", 725, 4, RIGHT + 1, "#fff", "4 2");
vline("axisLayer", 4, 114, 726, "#fff");
vline("axisLayer", RIGHT, 114, 726, "#fff");

add("axisLayer", "text", { "class": "ax", x: 1877, y: 712 }, "70");
add("axisLayer", "text", { "class": "ax", x: 1877, y: 718 }, "100");
add("axisLayer", "text", { "class": "ax", x: 1877, y: 726 }, "0");

// time axis
var labels = ["30 Jun 2016"];
var minutes = 20 * 60;
for (k = 0; k <= 24; k++) {
  var hh = Math.floor(minutes / 60) % 24, mm = minutes % 60;
  var clock = (hh < 10 ? "0" : "") + hh + ":" + (mm < 10 ? "0" : "") + mm;
  labels.push((k < 12 ? "30 Jun " : "1 Jul ") + clock);
  minutes += 20;
}
labels.forEach(function (text, idx) {
  var tick = 5 + 64 * idx;
  vline("axisLayer", tick, 726, 730, "#fff");
  add("axisLayer", "text", { "class": "ax", x: tick - 1, y: 739 }, text);
});
```
